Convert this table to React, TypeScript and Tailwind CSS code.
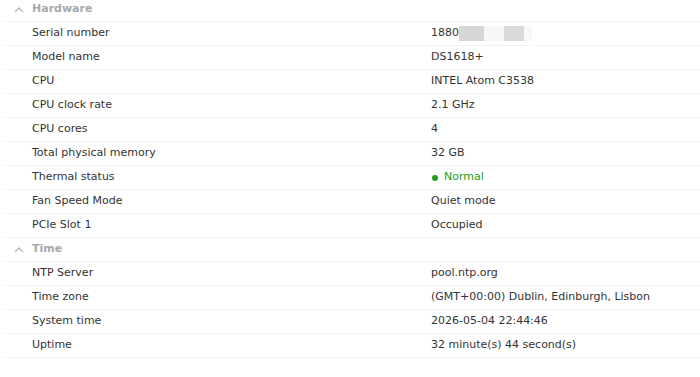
import React from "react";

type Row = { label: string; value: React.ReactNode };

const Chevron = () => (
  <svg width="10" height="7" viewBox="0 0 10 7" className="mr-[8px]">
    <path d="M1 6 L5 2 L9 6" fill="none" stroke="#b8b8b8" strokeWidth="1.3" />
  </svg>
);

const Header = ({ title }: { title: string }) => (
  <div className="flex h-[24px] items-center border-b border-[#f3f3f3] pl-[11px] text-[11px] font-bold text-[#a8a8a8]">
    <Chevron />
    <span>{title}</span>
  </div>
);

const Item = ({ label, value }: Row) => (
  <div className="flex h-[24px] items-center border-b border-[#f3f3f3] text-[11px] text-[#333]">
    <div className="w-[428px] pl-[29px]">{label}</div>
    <div className="flex-1">{value}</div>
  </div>
);

const Serial = () => (
  <span className="flex items-center">
    <span>1880</span>
    <span className="h-[15px] w-[25px] bg-[#d6d6d6]" />
    <span className="h-[15px] w-[20px] bg-[#f7f7f7]" />
    <span className="h-[15px] w-[20px] bg-[#dadada]" />
    <span className="h-[15px] w-[8px] bg-[#f8f8f8]" />
  </span>
);

const Normal = () => (
  <span className="flex items-center text-[#1e9e1e]">
    <span className="ml-[1px] mr-[6px] h-[6px] w-[6px] rounded-full bg-[#1e9e1e]" />
    Normal
  </span>
);

const hardware: Row[] = [
  { label: "Serial number", value: <Serial /> },
  { label: "Model name", value: "DS1618+" },
  { label: "CPU", value: "INTEL Atom C3538" },
  { label: "CPU clock rate", value: "2.1 GHz" },
  { label: "CPU cores", value: "4" },
  { label: "Total physical memory", value: "32 GB" },
  { label: "Thermal status", value: <Normal /> },
  { label: "Fan Speed Mode", value: "Quiet mode" },
  { label: "PCIe Slot 1", value: "Occupied" },
];

const time: Row[] = [
  { label: "NTP Server", value: "pool.ntp.org" },
  { label: "Time zone", value: "(GMT+00:00) Dublin, Edinburgh, Lisbon" },
  { label: "System time", value: "2026-05-04 22:44:46" },
  { label: "Uptime", value: "32 minute(s) 44 second(s)" },
];

export default function App() {
  return (
    <div
      className="h-[377px] w-[700px] overflow-hidden bg-white"
      style={{ fontFamily: '"DejaVu Sans", Verdana, sans-serif' }}
    >
      <div className="mt-[-2px] ml-[3px]">
        <Header title="Hardware" />
        {hardware.map((r) => (
          <Item key={r.label} {...r} />
        ))}
        <Header title="Time" />
        {time.map((r) => (
          <Item key={r.label} {...r} />
        ))}
      </div>
    </div>
  );
}
